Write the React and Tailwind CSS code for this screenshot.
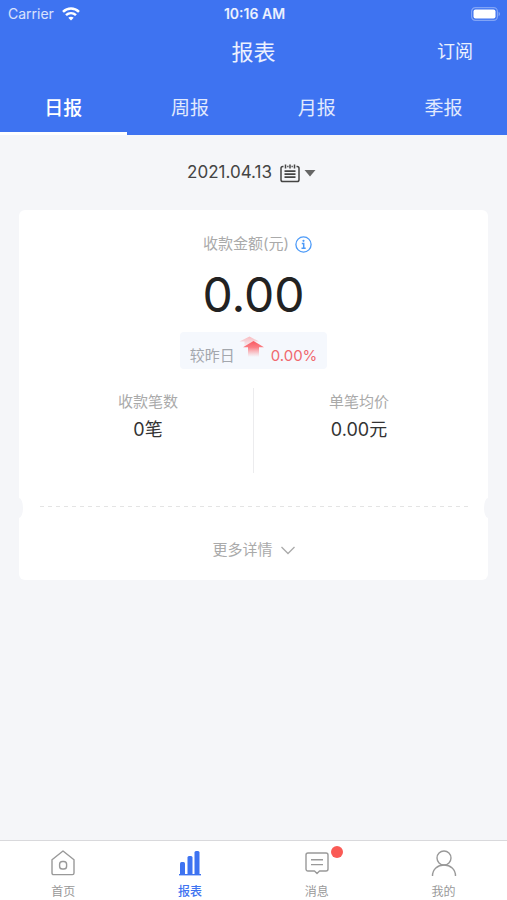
const TABS = ["日报", "周报", "月报", "季报"]

const NAV_ITEMS = [
  { id: "home", label: "首页", Icon: HomeIcon },
  { id: "report", label: "报表", Icon: ChartIcon },
  { id: "message", label: "消息", Icon: MessageIcon, unread: true },
  { id: "mine", label: "我的", Icon: UserIcon },
]

function WifiIcon() {
  return (
    <svg width="18" height="14" viewBox="0 0 18 14" fill="none" stroke="currentColor" strokeWidth="2.5">
      <path d="M1 4.9C5.6.4 12.4.4 17 4.9" />
      <path d="M4 8.2c2.900-2.700 7.100-2.700 10 0" />
      <path d="M9 13.500 6.300 10.800c1.500-1.500 3.900-1.500 5.400 0z" fill="currentColor" stroke="none" />
    </svg>
  )
}

function BatteryIcon() {
  return (
    <svg width="30" height="14" viewBox="0 0 30 14">
      <rect x="0.6" y="0.6" width="25.8" height="12.8" rx="3.8" fill="none" stroke="#fff" strokeOpacity="0.35" strokeWidth="1.2" />
      <rect x="2.5" y="2.5" width="22" height="9" rx="2" fill="#fff" />
      <path d="M27.600 4.800c1.800.700 1.800 3.700 0 4.400z" fill="#fff" fillOpacity="0.4" />
    </svg>
  )
}

function CalendarIcon() {
  return (
    <svg width="20" height="19" viewBox="0 0 20 19" fill="none" stroke="#444" strokeWidth="1.5">
      <path d="M3.500 2.500H2.800c-1 0-1.800.800-1.800 1.800v11.400c0 1 .800 1.800 1.800 1.800h14.400c1 0 1.800-.800 1.800-1.800V4.300c0-1-.800-1.800-1.800-1.800h-.700" />
      <path d="M5.500.500v4M10 .500v4M14.500.500v4M7.200 2.500h1.300M11.500 2.500h1.300" />
      <path d="M4.500 7.200h11M4.500 10.200h11M4.500 13.200h11" strokeWidth="1.8" />
    </svg>
  )
}

function InfoIcon() {
  return (
    <svg width="17" height="17" viewBox="0 0 17 17" fill="none" stroke="#4c9af8" strokeWidth="1.3">
      <circle cx="8.5" cy="8.5" r="7.6" />
      <circle cx="8.5" cy="4.8" r="1.1" fill="#4c9af8" stroke="none" />
      <path d="M6.800 7.500h1.900v4.800M6.500 12.300h4.200" strokeWidth="1.5" />
    </svg>
  )
}

function TrendIcon() {
  return (
    <svg width="26" height="24" viewBox="0 0 26 24">
      <defs>
        <linearGradient id="trend-front" x1="0" y1="0" x2="0" y2="1">
          <stop offset="0" stopColor="#f9585f" />
          <stop offset="0.4" stopColor="#fb7f85" />
          <stop offset="1" stopColor="#fb9da1" stopOpacity="0" />
        </linearGradient>
        <linearGradient id="trend-back" x1="0" y1="0" x2="0" y2="1">
          <stop offset="0" stopColor="#fba0a4" />
          <stop offset="1" stopColor="#fba0a4" stopOpacity="0" />
        </linearGradient>
      </defs>
      <path d="M10.500.500 20 5.500h-4.500V12h-10V5.500H.500z" fill="url(#trend-back)" opacity="0.7" />
      <path d="M14.500 5 25 11.200h-5V21H9v-9.800H4z" fill="url(#trend-front)" />
    </svg>
  )
}

function HomeIcon() {
  return (
    <svg width="24" height="26" viewBox="0 0 24 26" fill="none" stroke="currentColor" strokeWidth="1.4" strokeLinejoin="round">
      <path d="M1 9.800 12 1l11 8.800V23c0 1-.600 1.600-1.600 1.600H2.600C1.600 24.600 1 24 1 23z" />
      <rect x="8.6" y="11.5" width="7" height="7.5" rx="2.8" />
    </svg>
  )
}

function ChartIcon() {
  return (
    <svg width="24" height="26" viewBox="0 0 24 26" fill="currentColor">
      <rect x="2" y="12" width="5" height="13" rx="1.5" />
      <rect x="9.5" y="6" width="5" height="19" rx="1.5" />
      <rect x="16.5" y="1" width="5" height="24" rx="1.5" />
      <path d="M1 24h22v1.400H1z" />
    </svg>
  )
}

function MessageIcon() {
  return (
    <svg width="24" height="26" viewBox="0 0 24 26" fill="none" stroke="currentColor" strokeWidth="1.4" strokeLinejoin="round">
      <path d="M3 3h18c1.200 0 2 .800 2 2v14c0 1.200-.800 2-2 2h-6.500L12 23.400 9.500 21H3c-1.200 0-2-.800-2-2V5c0-1.200.800-2 2-2z" />
      <path d="M6 9.800h12M6 14.600h12" />
    </svg>
  )
}

function UserIcon() {
  return (
    <svg width="26" height="26" viewBox="0 0 26 26" fill="none" stroke="currentColor" strokeWidth="1.4">
      <circle cx="13" cy="8" r="7" />
      <path d="M1.500 26C1.500 19.400 6.500 15 13 15s11.500 4.400 11.500 11" />
    </svg>
  )
}

function StatusBar() {
  return (
    <div className="grid grid-cols-3 items-center h-7 pl-2 pr-1.5">
      <div className="flex items-center gap-2 text-sm text-white/80">
        Carrier
        <span className="text-white"><WifiIcon /></span>
      </div>
      <p className="text-center text-sm font-semibold text-white/90">10:16 AM</p>
      <div className="flex justify-end"><BatteryIcon /></div>
    </div>
  )
}

function Stat({ label, value }) {
  return (
    <div className="flex-1 flex flex-col items-center pt-0.5">
      <p className="text-[15px] leading-6 text-[#aaa]">{label}</p>
      <p className="mt-0.5 text-lg leading-7 text-[#333]">{value}</p>
    </div>
  )
}

export default function App() {
  return (
    <div className="min-h-screen flex flex-col bg-[#f5f6f9] font-[Inter,'Noto_Sans_CJK_SC',sans-serif]">

      {/* Header */}
      <header className="bg-[#3e73f1] text-white">
        <StatusBar />
        <div className="grid grid-cols-3 items-center h-12 px-[34px]">
          <h1 className="col-start-2 text-center text-[22px] text-white/90">报表</h1>
          <button className="justify-self-end text-lg text-white/90">订阅</button>
        </div>
        <div role="tablist" className="flex">
          {TABS.map((tab, i) => (
            <button
              key={tab}
              role="tab"
              aria-selected={i === 0}
              className={
                i === 0
                  ? "flex-1 h-[59px] pt-2.5 border-b-3 border-white text-[19px] font-medium"
                  : "flex-1 h-[59px] pt-2.5 border-b-3 border-transparent text-[19px] text-white/85"
              }
            >
              {tab}
            </button>
          ))}
        </div>
      </header>

      <main className="flex-1">
        {/* Date picker */}
        <button className="flex items-center mx-auto mt-6 h-6 pt-1 pr-1 text-[17px] text-[#444]">
          2021.04.13
          <span className="ml-2"><CalendarIcon /></span>
          <svg className="ml-1" width="12" height="7" viewBox="0 0 12 7" fill="#666">
            <path d="M.500 0h11L6 6.500z" />
          </svg>
        </button>

        {/* Report card */}
        <section className="mx-[19px] mt-[27px]">
          <div className="flex flex-col items-center h-72 pt-[22px] bg-white rounded-t-md">
            <div className="flex items-center gap-1.5 pl-2">
              <h2 className="text-[15px] leading-6 text-[#aaa]">收款金额(元)</h2>
              <button aria-label="说明"><InfoIcon /></button>
            </div>
            <p className="mt-2 text-5xl leading-[62px] text-[#222]">0.00</p>
            <div className="mt-1.5 flex h-[37px] items-start gap-1 rounded-sm bg-[#f5f8fd] px-2.5">
              <span className="pt-3 text-[15px] leading-6 text-[#a3a7ad]">较昨日</span>
              <span className="pt-1"><TrendIcon /></span>
              <span className="ml-0.5 pt-3 text-[15px] leading-6 text-[#f0686e]">0.00%</span>
            </div>
            <div className="mt-[19px] flex self-stretch px-6">
              <Stat label="收款笔数" value="0笔" />
              <div className="h-[85px] w-px bg-[#ececee]" />
              <Stat label="单笔均价" value="0.00元" />
            </div>
          </div>

          {/* Ticket notch */}
          <svg className="block w-full" height="20" aria-hidden="true">
            <rect width="100%" height="20" fill="#fff" />
            <ellipse cx="0" cy="10" rx="4" ry="10" fill="#f5f6f9" />
            <ellipse cx="100%" cy="10" rx="4" ry="10" fill="#f5f6f9" />
            <line x1="21" y1="8.5" x2="96%" y2="8.5" stroke="#e4e4e4" strokeDasharray="4 4" />
          </svg>

          <button className="flex h-[62px] w-full items-center justify-center gap-2 rounded-b-md bg-white pt-0.5 text-[15px] text-[#aaa]">
            更多详情
            <svg width="14" height="9" viewBox="0 0 14 9" fill="none" stroke="#aaa" strokeWidth="1.3">
              <path d="m.500 1 6.500 6.500L13.500 1" />
            </svg>
          </button>
        </section>
      </main>

      {/* Bottom navigation */}
      <nav className="flex border-t border-[#d9d9dc] bg-white">
        {NAV_ITEMS.map(({ id, label, Icon, unread }) => (
          <button
            key={id}
            className={
              id === "report"
                ? "flex flex-1 flex-col items-center gap-2 pt-[9px] text-xs text-[#3e73f1] font-medium"
                : "flex flex-1 flex-col items-center gap-2 pt-[9px] text-xs text-[#999]"
            }
          >
            <span className="relative">
              <Icon />
              {unread && <span className="absolute -top-1 -right-3.5 size-3 rounded-full bg-[#fa5a55]" />}
            </span>
            <span className="h-4 leading-4">{label}</span>
          </button>
        ))}
      </nav>
    </div>
  )
}
